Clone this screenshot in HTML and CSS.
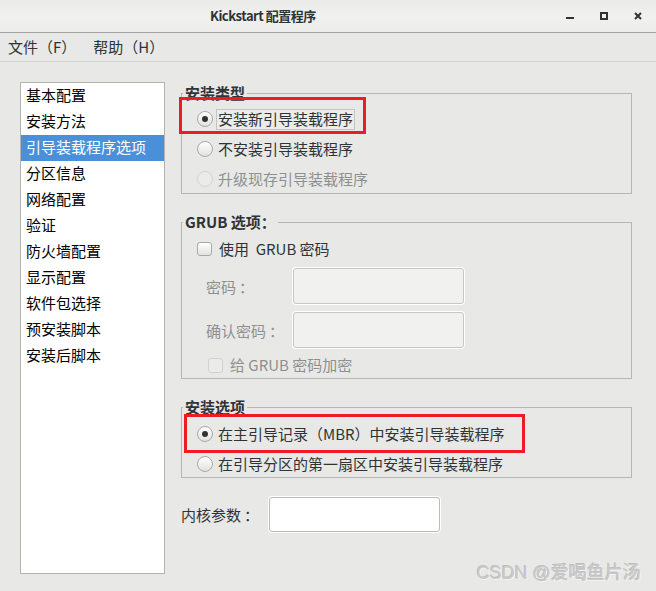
FILE: index.html
```html
<!DOCTYPE html>
<html lang="zh-CN">
<head>
<meta charset="utf-8">
<title>Kickstart 配置程序</title>
<link rel="stylesheet" href="styles.css">
</head>
<body>
<div class="window">
  <header class="titlebar">
    <div class="title">Kickstart 配置程序</div>
    <div class="controls">
      <svg class="ctl" width="8" height="8" viewBox="0 0 8 8"><rect x="0" y="5" width="8" height="2" fill="#2e3436"/></svg>
      <svg class="ctl" width="8" height="8" viewBox="0 0 8 8"><rect x="1" y="1" width="6" height="6" fill="none" stroke="#2e3436" stroke-width="2"/></svg>
      <svg class="ctl" width="8" height="8" viewBox="0 0 8 8"><path d="M1 1 L7 7 M7 1 L1 7" stroke="#2e3436" stroke-width="2" fill="none"/></svg>
    </div>
  </header>
  <nav class="menubar">
    <span class="menu-item">文件（F）</span>
    <span class="menu-item">帮助（H）</span>
  </nav>
  <main class="content">
    <ul class="nav-list">
      <li class="nav-item">基本配置</li>
      <li class="nav-item">安装方法</li>
      <li class="nav-item selected">引导装载程序选项</li>
      <li class="nav-item">分区信息</li>
      <li class="nav-item">网络配置</li>
      <li class="nav-item">验证</li>
      <li class="nav-item">防火墙配置</li>
      <li class="nav-item">显示配置</li>
      <li class="nav-item">软件包选择</li>
      <li class="nav-item">预安装脚本</li>
      <li class="nav-item">安装后脚本</li>
    </ul>
    <div class="panel">
      <fieldset class="group">
        <legend>安装类型</legend>
        <div class="options options-type">
          <div class="row">
            <span class="radio checked"></span><span class="label focused">安装新引导装载程序</span>
            <span class="mark mark-type"></span>
          </div>
          <div class="row">
            <span class="radio"></span><span class="label">不安装引导装载程序</span>
          </div>
          <div class="row disabled">
            <span class="radio"></span><span class="label">升级现存引导装载程序</span>
          </div>
        </div>
      </fieldset>

      <fieldset class="group">
        <legend>GRUB 选项：</legend>
        <div class="options options-grub">
          <div class="row check-row">
            <span class="checkbox"></span><span class="check-label">使用&nbsp;&nbsp;GRUB 密码</span>
          </div>
          <div class="fields">
            <span class="field-label">密码<span class="colon">：</span></span>
            <span class="input input-disabled"></span>
            <span class="field-label">确认密码<span class="colon">：</span></span>
            <span class="input input-disabled"></span>
          </div>
          <div class="row check-row indented disabled">
            <span class="checkbox"></span><span class="check-label">给 GRUB 密码加密</span>
          </div>
        </div>
      </fieldset>

      <fieldset class="group">
        <legend>安装选项</legend>
        <div class="options options-install">
          <div class="row">
            <span class="radio checked"></span><span class="label">在主引导记录（MBR）中安装引导装载程序</span>
            <span class="mark mark-install"></span>
          </div>
          <div class="row">
            <span class="radio"></span><span class="label">在引导分区的第一扇区中安装引导装载程序</span>
          </div>
        </div>
      </fieldset>

      <div class="kernel-row">
        <span class="kernel-label">内核参数<span class="colon">：</span></span>
        <span class="input input-kernel"></span>
      </div>
    </div>
  </main>
  <div class="watermark">CSDN @爱喝鱼片汤</div>
</div>
</body>
</html>
```
FILE: styles.css
```css
html, body {
  margin: 0;
  padding: 0;
}

body {
  background: #e8e8e7;
  font-family: "Noto Sans CJK SC", "Noto Sans", sans-serif;
  font-size: 15px;
  color: #2e3436;
}

.window {
  position: relative;
  width: 656px;
  height: 591px;
  overflow: hidden;
  background: #e8e8e7;
}

/* Title bar */
.titlebar {
  display: flex;
  align-items: center;
  height: 32px;
  border-bottom: 1px solid #a3a3a1;
  background: linear-gradient(#e9e9e8, #f1f1f0 50%, #ececeb);
}

.title {
  margin-left: 210px;
  font-size: 13px;
  font-weight: bold;
  letter-spacing: -0.5px;
  color: #2e3436;
  line-height: 18px;
}

.controls {
  margin-left: auto;
  margin-right: 14px;
  display: flex;
  align-items: center;
  gap: 26px;
}

.ctl {
  display: block;
}

/* Menu bar */
.menubar {
  display: flex;
  align-items: center;
  height: 28px;
  border-bottom: 1px solid #d3d3d1;
  padding-left: 8px;
  gap: 17px;
}

.menu-item {
  line-height: 20px;
  color: #2e3436;
}

/* Content */
.content {
  display: flex;
  align-items: flex-start;
  gap: 16px;
  padding: 20px 0 0 20px;
}

.nav-list {
  list-style: none;
  margin: 0;
  padding: 0;
  width: 145px;
  height: 492px;
  box-sizing: border-box;
  background: #fff;
  border: 1px solid #b3b3b0;
}

.nav-item {
  height: 26px;
  line-height: 24px;
  padding-left: 5px;
  padding-bottom: 2px;
  box-sizing: border-box;
  color: #000;
  white-space: nowrap;
}

.nav-item.selected {
  background: #4a90d9;
  color: #fff;
}

.panel {
  width: 451px;
  padding-top: 2px;
  display: flex;
  flex-direction: column;
  gap: 19px;
}

/* Groups */
.group {
  margin: 0;
  padding: 0;
  min-width: 0;
  border: 1px solid #b6b6b4;
}

.group legend {
  margin-left: 1px;
  padding: 0 2px;
  font-weight: bold;
  font-size: 15px;
  line-height: 18px;
  color: #2e3436;
}

.options {
  display: flex;
  flex-direction: column;
}

.options-type {
  padding: 4px 0 1px;
  gap: 4px;
}

.options-install {
  padding-top: 5px;
  gap: 4px;
}

.options-grub {
  padding-top: 5px;
}

.row {
  position: relative;
  display: flex;
  align-items: center;
  height: 26px;
  padding-left: 15px;
  gap: 3px;
}

.radio {
  width: 16px;
  height: 16px;
  box-sizing: border-box;
  border-radius: 50%;
  border: 1px solid #a9a9a7;
  background: linear-gradient(#ffffff, #e2e2e1);
  position: relative;
  flex: none;
}

.radio.checked::after {
  content: "";
  position: absolute;
  left: 4px;
  top: 4px;
  width: 6px;
  height: 6px;
  border-radius: 50%;
  background: #2e3436;
}

.label {
  border: 1px solid transparent;
  padding: 0 1px 1px;
  line-height: 18px;
  white-space: nowrap;
}

.label.focused {
  border-color: #c3c3c1;
  background: #ececeb;
}

.row.disabled .radio {
  border-color: #d3d3d1;
  background: #ebebea;
}

.row.disabled .label,
.row.disabled .check-label {
  color: #8d9091;
}

/* Annotation boxes */
.mark {
  position: absolute;
  box-sizing: border-box;
  border: 3px solid #ec1c24;
  pointer-events: none;
}

.mark-type {
  left: -3px;
  top: -9px;
  width: 187px;
  height: 37px;
}

.mark-install {
  left: 2px;
  top: -7px;
  width: 341px;
  height: 39px;
}

/* Checkbox rows */
.check-row {
  gap: 7px;
}

.checkbox {
  width: 15px;
  height: 14px;
  box-sizing: border-box;
  border: 1px solid #a9a9a7;
  border-radius: 3px;
  background: linear-gradient(#ffffff, #e2e2e1);
  flex: none;
}

.check-label {
  line-height: 18px;
  padding-bottom: 1px;
  white-space: nowrap;
}

.check-row.indented {
  padding-left: 26px;
  margin-top: 4px;
}

.check-row.indented .checkbox {
  height: 15px;
  border-color: #d0d0ce;
  background: #ebebea;
}

.fields {
  display: grid;
  grid-template-columns: 87px 171px;
  row-gap: 8px;
  align-items: center;
  margin: 6px 0 0 24px;
}

.field-label {
  color: #8d9091;
  white-space: nowrap;
}

.colon {
  margin-left: 3px;
}

.input {
  display: block;
  box-sizing: border-box;
  border: 1px solid #c6c6c4;
  border-radius: 3px;
  box-shadow: 0 0 0 1px #ffffff;
}

.input-disabled {
  height: 36px;
  background: #f1f1f0;
}

/* Kernel row */
.kernel-row {
  display: flex;
  align-items: center;
}

.kernel-label {
  width: 88px;
  white-space: nowrap;
  color: #2e3436;
}

.input-kernel {
  width: 171px;
  height: 35px;
  background: #ffffff;
  border-color: #bcbcba;
}

/* Watermark */
.watermark {
  position: absolute;
  right: 15px;
  bottom: 7px;
  font-family: "Liberation Sans", "Noto Sans CJK SC", sans-serif;
  font-size: 18px;
  color: #c9c9c9;
  text-shadow: -1px -1px 0 rgba(110, 110, 110, 0.35), 1px 1px 0 rgba(255, 255, 255, 0.5);
  white-space: nowrap;
}
```
